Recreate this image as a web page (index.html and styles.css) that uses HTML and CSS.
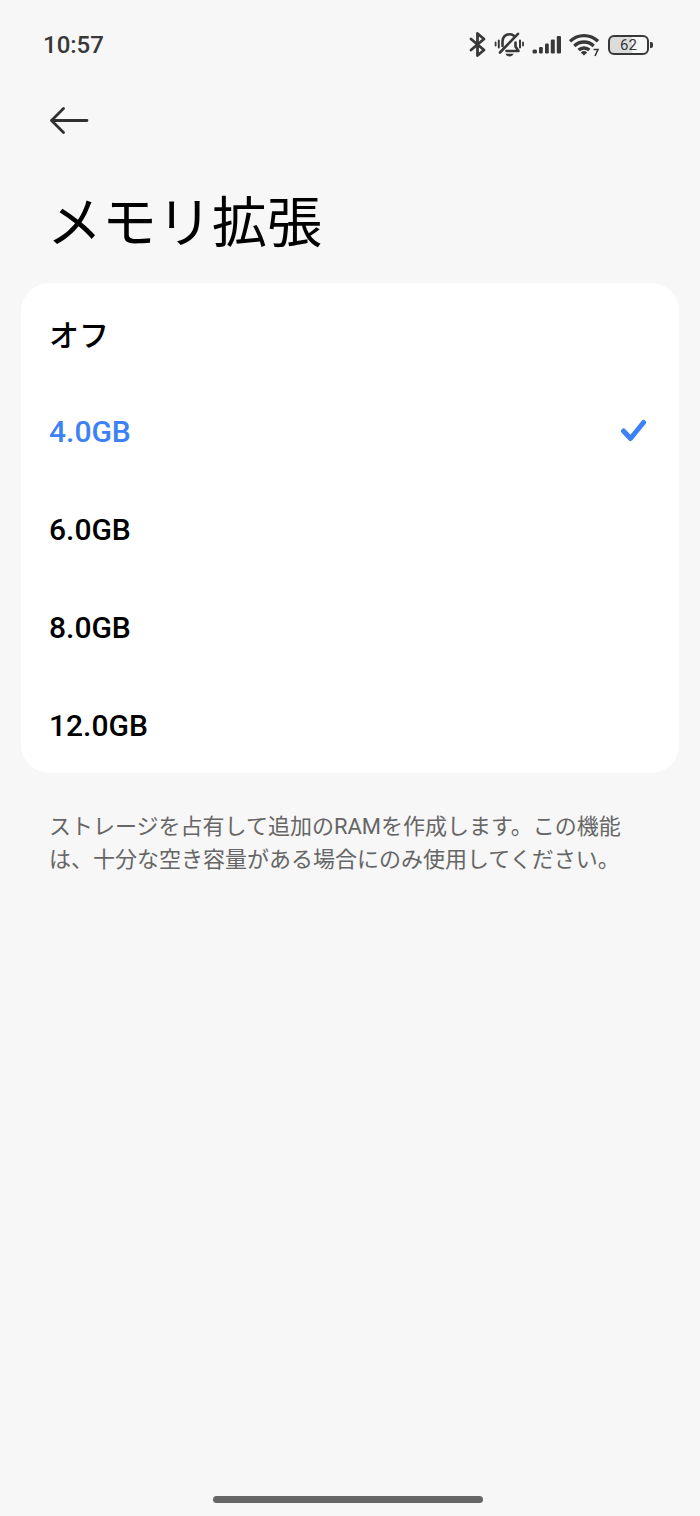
FILE: index.html
```html
<!DOCTYPE html>
<html lang="ja">
<head>
  <meta charset="UTF-8" />
  <meta name="viewport" content="width=device-width, initial-scale=1" />
  <title>メモリ拡張</title>
  <link rel="stylesheet" href="styles.css">
</head>
<body>
  <header class="status-bar">
    <time class="clock">10:57</time>
    <div class="status-icons">
      <svg class="icon-bluetooth" width="18" height="26" viewBox="0 0 18 26" fill="none" stroke="currentColor" stroke-width="2.8" stroke-linecap="round" stroke-linejoin="round">
        <path d="M3 7 16 18 9.500 23.500V1.500L16 7 3 18" />
      </svg>
      <svg class="icon-mute" width="30" height="26" viewBox="0 0 30 26" fill="none" stroke="currentColor" stroke-width="2.6" stroke-linecap="round" stroke-linejoin="round">
        <path d="M8.500 14V9.500C8.500 5 11.300 2.300 15.500 2.300c1.500 0 2.800.3 3.900 1M21.500 10.500v4l3 4.500H12.500M24 1.800 6 20.500" />
        <path d="M4.800 8.500v7M26 8.500v7" stroke-width="2" />
        <path d="M1.600 10.500v3M29 10.500v3" stroke-width="1.800" />
        <path d="M11.500 21.800h8c-.6 1.700-2.100 2.600-4 2.600s-3.400-.9-4-2.600z" fill="currentColor" stroke="none" />
      </svg>
      <svg class="icon-signal" width="29" height="20" viewBox="0 0 29 20" fill="currentColor">
        <rect x="0.500" y="14.500" width="4.500" height="4" rx="1.500" />
        <rect x="7" y="12" width="3.800" height="6.500" rx="1.200" />
        <rect x="13" y="8.500" width="3.800" height="10" rx="1.200" />
        <rect x="18.800" y="4.500" width="4" height="14" rx="1.200" />
        <rect x="24.800" y="1" width="4.200" height="17.500" rx="1.200" />
      </svg>
      <svg class="icon-wifi" width="31" height="24" viewBox="0 0 31 24" fill="none" stroke="currentColor" stroke-width="3.4">
        <path d="M1 8.300a20 20 0 0 1 28 0" />
        <path d="M5.300 12.900a14 14 0 0 1 19.400 0" />
        <path d="M9.600 17.100a8 8 0 0 1 10.800 0" />
        <path d="M11.800 19.500a4.800 4.800 0 0 1 6.400 0L15 22.500z" fill="currentColor" stroke="none" />
        <path d="M24.500 16.500h4.500l-3 6.500" stroke-width="1.600" />
      </svg>
      <div class="battery"><span class="battery-level">62</span></div>
    </div>
  </header>

  <main>
    <button class="back" type="button" aria-label="戻る">
      <svg width="40" height="28" viewBox="0 0 40 28" fill="none" stroke="currentColor" stroke-width="2.8" stroke-linecap="round" stroke-linejoin="round">
        <path d="M38 13.500H2.500M14.500 1.500 2.500 13.500l12 12" />
      </svg>
    </button>

    <h1 class="title" id="title">メモリ拡張</h1>

    <form class="options" role="radiogroup" aria-labelledby="title">
      <label class="option">
        <input type="radio" name="memory" value="0" />
        <span>オフ</span>
      </label>
      <label class="option">
        <input type="radio" name="memory" value="4" checked />
        <span>4.0GB</span>
        <svg class="check" width="28" height="24" viewBox="0 0 28 24"><path d="M4.500 12 11.500 19.500 24.500 3.500" /></svg>
      </label>
      <label class="option">
        <input type="radio" name="memory" value="6" />
        <span>6.0GB</span>
      </label>
      <label class="option">
        <input type="radio" name="memory" value="8" />
        <span>8.0GB</span>
      </label>
      <label class="option">
        <input type="radio" name="memory" value="12" />
        <span>12.0GB</span>
      </label>
    </form>

    <p class="note">ストレージを占有して追加のRAMを作成します。この機能は、十分な空き容量がある場合にのみ使用してください。</p>
  </main>

  <footer class="nav-area"><div class="nav-handle"></div></footer>

  <script>
    // 選択した行にチェックマークを移動する
    const check = document.querySelector('.check');
    document.querySelector('.options').addEventListener('change', (e) => {
      e.target.closest('.option').appendChild(check);
    });
  </script>
</body>
</html>
```

FILE: styles.css
```css
* {
  box-sizing: border-box;
}
body {
  margin: 0;
  min-height: 100vh;
  display: flex;
  flex-direction: column;
  background-color: #f7f7f7;
  color: #000;
  font-family: Roboto, 'Noto Sans CJK JP', sans-serif;
}

/* ステータスバー */
.status-bar {
  display: flex;
  justify-content: space-between;
  align-items: center;
  height: 90px;
  padding: 0 47px 0 43px;
  color: #383838;
}
.clock {
  font-size: 24px;
  font-weight: 500;
  line-height: 28px;
}
.status-icons {
  display: flex;
  align-items: center;
  gap: 8px;
}
.battery {
  position: relative;
  width: 41px;
  height: 20px;
  margin-right: 4px;
  border: 2px solid #383838;
  border-radius: 6px;
  background: linear-gradient(to right, #dcdcdc 60%, #f7f7f7 60%);
  text-align: center;
}
.battery::after {
  content: '';
  position: absolute;
  top: 5px;
  right: -6px;
  width: 3px;
  height: 6px;
  border-radius: 0 2px 2px 0;
  background-color: #383838;
}
.battery-level {
  display: block;
  font-size: 15px;
  line-height: 17px;
}

main {
  flex: 1;
  padding: 0 21px;
}
.back {
  display: block;
  height: 62px;
  margin-left: 28px;
  padding: 0;
  border: none;
  background: none;
  color: #303030;
  cursor: pointer;
}
.back svg {
  display: block;
}
.title {
  margin: 31px 26px 20px;
  font-size: 55px;
  font-weight: 400;
  line-height: 80px;
}

/* 容量の選択肢 */
.options {
  border-radius: 28px;
  background-color: #fff;
  overflow: hidden;
}
.option {
  display: flex;
  align-items: center;
  height: 98px;
  padding: 2px 32px 0 28px;
  font-size: 30px;
  font-weight: 500;
  cursor: pointer;
}
.option input {
  appearance: none;
  width: 0;
  margin: 0;
}
.option:has(input:checked) {
  color: #3c82f6;
}
.option:has(input:focus-visible) {
  background-color: #f0f0f0;
}
.check {
  margin-left: auto;
  fill: none;
  stroke: currentColor;
  stroke-width: 5;
  stroke-linecap: round;
  stroke-linejoin: round;
}
.note {
  margin: 37px 28px;
  color: #666;
  font-size: 22px;
  line-height: 33px;
}

.nav-area {
  display: flex;
  justify-content: center;
  padding: 0 4px 13px 0;
}
.nav-handle {
  width: 270px;
  height: 7px;
  border-radius: 4px;
  background-color: #666;
}
```
